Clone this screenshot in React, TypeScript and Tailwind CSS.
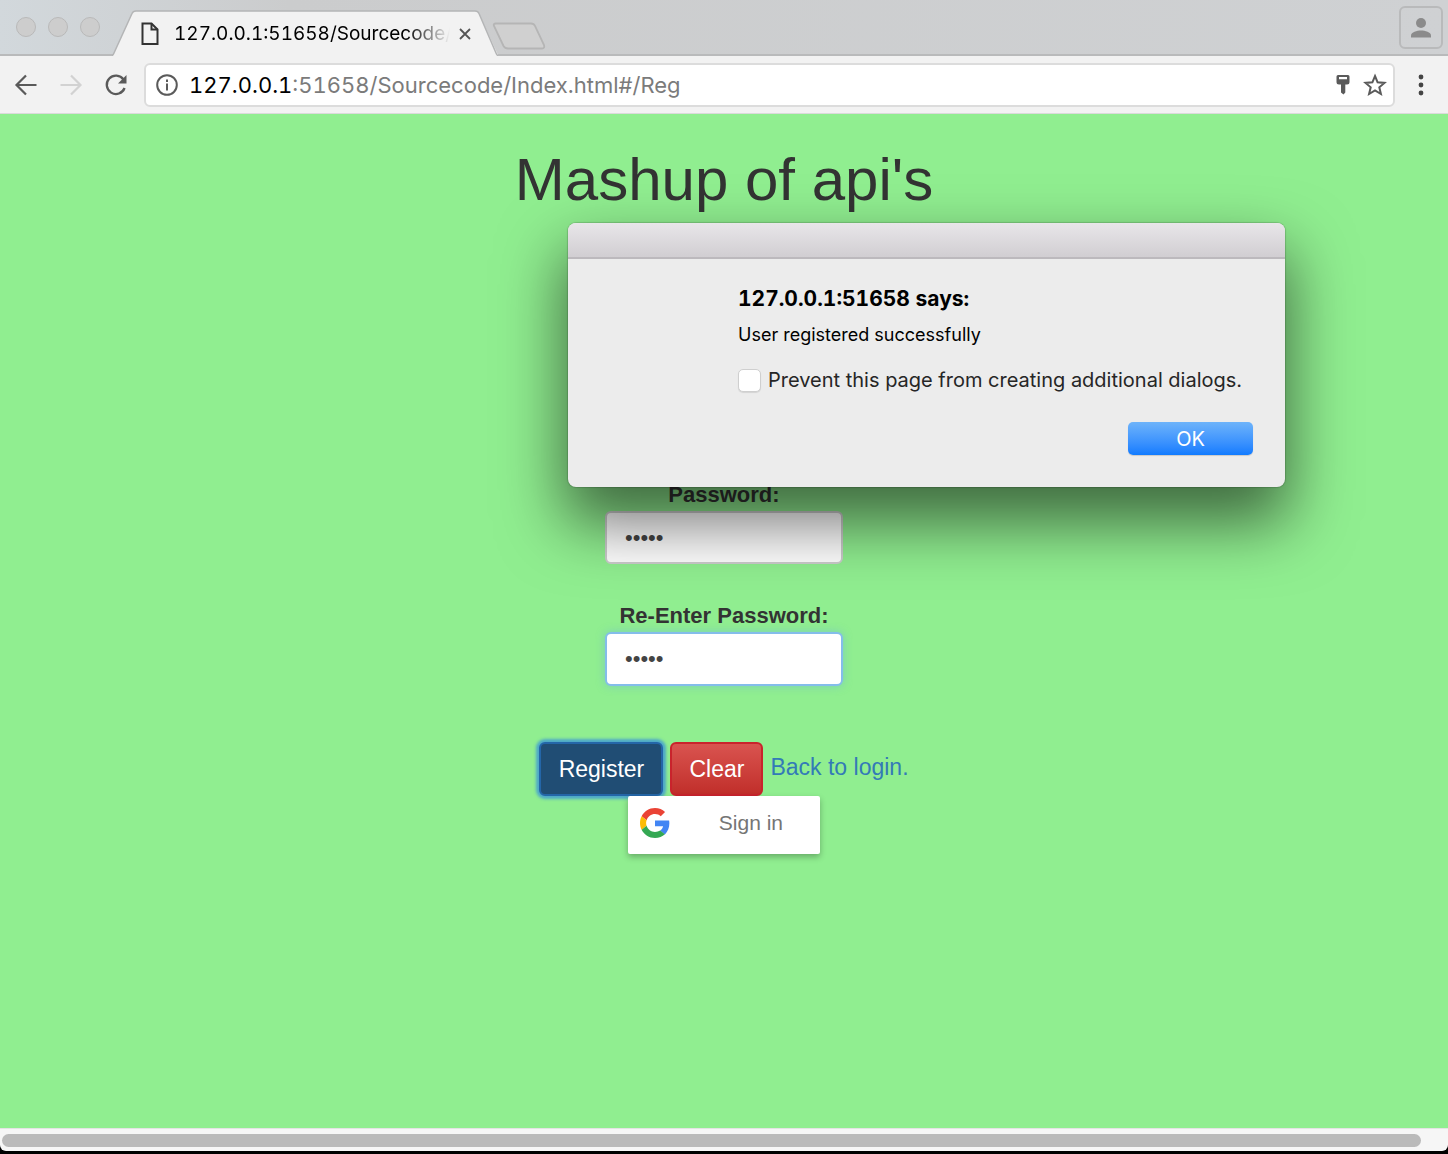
import React from "react";

function TabStrip() {
  return (
    <header className="relative flex h-[56px] items-start border-b-2 border-[#b9babb] bg-linear-to-r from-[#d2d8dc] via-[#cbcccd] via-20% to-[#cfd1d3]">
      <div className="flex gap-3 pt-[17px] pl-4">
        <span className="size-5 rounded-full border border-[#b9b9b9] bg-[#cdcdcd]" />
        <span className="size-5 rounded-full border border-[#b9b9b9] bg-[#cdcdcd]" />
        <span className="size-5 rounded-full border border-[#b9b9b9] bg-[#cdcdcd]" />
      </div>
      <div className="relative ml-3 h-[56px] w-[386px]">
        <svg className="absolute inset-0" width="386" height="56" viewBox="0 0 386 56" aria-hidden="true">
          <path d="M0 56 L1 55 L20 13.500 Q21 11 24 11 H363 Q366 11 367 13.500 L386 55 V56Z" fill="#f2f2f2" />
          <path d="M0 55.500 Q1 55.500 2 53 L20 13.500 Q21 11 24 11 H363 Q366 11 367 13.500 L384 53 Q385 55.500 386 55.500" fill="none" stroke="#b4b5b6" strokeWidth="1.500" />
        </svg>
        <div className="relative flex h-full items-center pt-3 pl-[29px]">
          <svg width="18" height="24" viewBox="0 0 18 24" fill="none" stroke="#333" strokeWidth="2" aria-hidden="true">
            <path d="M1.500 1.500H10.500L16.500 7.500V22H1.500Z" />
            <path d="M10.500 1.500V7.500H16.500" />
          </svg>
          <span className="ml-[15px] w-[276px] mask-r-from-84% mask-r-to-100% font-['Inter',sans-serif] text-[19px] leading-6 whitespace-nowrap text-black tabular-nums">
            127.0.0.1:51658/Sourcecode/
          </span>
          <button type="button" aria-label="Close tab" className="ml-2">
            <svg width="14" height="14" viewBox="0 0 14 14" stroke="#555" strokeWidth="1.800" aria-hidden="true">
              <path d="M2 2L12 12M12 2L2 12" />
            </svg>
          </button>
        </div>
      </div>
      <button type="button" aria-label="New tab" className="-ml-[6px] pt-[22px]">
        <svg width="56" height="28" viewBox="0 0 56 28" aria-hidden="true">
          <path d="M4 1.500H39Q42 1.500 43 4L52 23Q53 26.500 50 26.500H16Q13 26.500 11.500 24L2 4Q1 1.500 4 1.500Z" fill="#d0d0d0" stroke="#b5b5b5" strokeWidth="1.800" />
        </svg>
      </button>
      <button type="button" aria-label="Profile" className="mt-[6px] mr-[5px] ml-auto flex h-[43px] w-11 items-center justify-center rounded-md border-2 border-[#b9babb]">
        <svg width="22" height="22" viewBox="0 0 22 22" fill="#8b8b8b" aria-hidden="true">
          <circle cx="11" cy="6" r="5" />
          <path d="M1 20.500V18.500C1 15 7 13.500 11 13.500S21 15 21 18.500V20.500Z" />
        </svg>
      </button>
    </header>
  );
}

function Toolbar() {
  return (
    <div className="flex h-[58px] items-center border-b border-[#dadada] bg-[#f2f2f2] pr-[21px] pl-[14px]">
      <button type="button" aria-label="Back">
        <svg width="24" height="22" viewBox="0 0 24 22" fill="none" stroke="#5a5a5a" strokeWidth="2.200" aria-hidden="true">
          <path d="M22.500 11H3M12 1.500L2.500 11L12 20.500" />
        </svg>
      </button>
      <button type="button" aria-label="Forward" className="ml-[21px]">
        <svg width="24" height="22" viewBox="0 0 24 22" fill="none" stroke="#d2d2d2" strokeWidth="2.200" aria-hidden="true">
          <path d="M1.500 11H21M12 1.500L21.500 11L12 20.500" />
        </svg>
      </button>
      <button type="button" aria-label="Reload" className="ml-[21px]">
        <svg width="24" height="24" viewBox="0 0 24 24" aria-hidden="true">
          <path d="M19.500 6.500A9.200 9.200 0 1 0 20.600 15" fill="none" stroke="#5a5a5a" strokeWidth="2.300" />
          <path d="M22.500 2V10.500H14Z" fill="#5a5a5a" />
        </svg>
      </button>
      <div className="ml-4 flex h-11 min-w-0 flex-1 items-center rounded-md border-2 border-[#dcdcdc] bg-white pr-[6px] pl-[9px]">
        <svg width="24" height="24" viewBox="0 0 24 24" fill="none" stroke="#5a5a5a" strokeWidth="2" aria-hidden="true">
          <circle cx="12" cy="12" r="9.800" />
          <path d="M12 10.500V17.500M12 6.500V9" />
        </svg>
        <span className="ml-[10px] min-w-0 flex-1 truncate font-['Inter',sans-serif] text-[22px] leading-8 text-[#7b7b7b] tabular-nums">
          <span className="text-black">127.0.0.1</span>:51658/Sourcecode/Index.html#/Reg
        </span>
        <button type="button" aria-label="Saved password">
          <svg width="14" height="22" viewBox="0 0 14 22" fill="#5a5a5a" aria-hidden="true">
            <path fillRule="evenodd" d="M2 1H12Q13.500 1 13.500 2.500V8Q13.500 10.500 11 10.500H9.300V18.500L7.500 20.500L5 18.500V10.500H3Q.5 10.500 .5 8V2.500Q.5 1 2 1ZM3 3V5.200H11V3Z" />
          </svg>
        </button>
        <button type="button" aria-label="Bookmark" className="ml-[13px]">
          <svg width="24" height="24" viewBox="0 0 24 24" fill="none" stroke="#5a5a5a" strokeWidth="2" aria-hidden="true">
            <path d="M12 3L14.600 9.300L21.500 9.900L16.300 14.300L17.900 21L12 17.400L6.100 21L7.700 14.300L2.500 9.900L9.400 9.300Z" />
          </svg>
        </button>
      </div>
      <button type="button" aria-label="Menu" className="ml-5">
        <svg width="12" height="22" viewBox="0 0 12 22" fill="#444" aria-hidden="true">
          <circle cx="6" cy="3" r="2.400" />
          <circle cx="6" cy="11" r="2.400" />
          <circle cx="6" cy="19" r="2.400" />
        </svg>
      </button>
    </div>
  );
}

function AlertDialog() {
  return (
    <section
      role="dialog"
      aria-labelledby="alert-title"
      className="absolute top-[109px] left-[568px] w-[717px] rounded-lg bg-[#ececec] pb-8 font-['Inter',sans-serif] shadow-[0_0_1px_1px_rgba(0,0,0,0.15),0_32px_64px_4px_rgba(0,0,0,0.56)]"
    >
      <div className="h-9 rounded-t-lg border-b-2 border-[#bcb9bd] bg-linear-to-b from-[#e8e6e9] to-[#d1ced2]" />
      <div className="pr-8 pl-[170px]">
        <h2 id="alert-title" className="pt-[26px] text-[21px] leading-7 font-bold text-black tabular-nums">
          127.0.0.1:51658 says:
        </h2>
        <p className="pt-[10px] text-[18px] leading-6 text-black">User registered successfully</p>
        <label className="mt-[17px] flex items-center gap-[7px] text-[20px] leading-8 whitespace-nowrap text-[#262626]">
          <input
            type="checkbox"
            className="size-[23px] shrink-0 appearance-none rounded-[5px] border border-[#cfcfcf] bg-white shadow-[0_1px_1px_rgba(0,0,0,0.1)]"
          />
          Prevent this page from creating additional dialogs.
        </label>
        <div className="flex justify-end pt-[26px]">
          <button
            type="button"
            className="h-[33px] w-[125px] rounded-[5px] bg-linear-to-b from-[#6db3fa] to-[#0f7bff] text-[20px] leading-8 text-white shadow-[0_1px_1px_rgba(0,0,0,0.15)]"
          >
            OK
          </button>
        </div>
      </div>
    </section>
  );
}

function GoogleLogo() {
  return (
    <svg width="30" height="30" viewBox="0 0 48 48" aria-hidden="true">
      <path fill="#EA4335" d="M24 9.500c3.540 0 6.710 1.220 9.210 3.600l6.850-6.850C35.900 2.380 30.470 0 24 0 14.620 0 6.510 5.380 2.560 13.220l7.980 6.190C12.430 13.720 17.740 9.500 24 9.500z" />
      <path fill="#4285F4" d="M46.980 24.550c0-1.570-.15-3.090-.38-4.550H24v9.020h12.940c-.58 2.960-2.260 5.480-4.780 7.180l7.730 6c4.510-4.180 7.090-10.360 7.090-17.650z" />
      <path fill="#FBBC05" d="M10.530 28.590c-.48-1.450-.76-2.990-.76-4.590s.27-3.140.76-4.590l-7.980-6.190C.92 16.460 0 20.120 0 24c0 3.880.92 7.540 2.560 10.780l7.970-6.190z" />
      <path fill="#34A853" d="M24 48c6.480 0 11.930-2.130 15.890-5.810l-7.730-6c-2.150 1.450-4.920 2.300-8.160 2.300-6.260 0-11.570-4.220-13.470-9.910l-7.980 6.190C6.510 42.620 14.620 48 24 48z" />
    </svg>
  );
}

function RegisterPage() {
  return (
    <main className="relative flex-1 overflow-hidden bg-[#90ee90] font-['Liberation_Sans',sans-serif]">
      <form className="flex flex-col items-center text-[#333]">
        <h1 className="pt-8 text-[60px] leading-[68px] font-medium">Mashup of api's</h1>
        <label htmlFor="password" className="mt-[265px] text-[22px] leading-8 font-bold">
          Password:
        </label>
        <input
          id="password"
          type="password"
          defaultValue="abcde"
          className="h-[53px] w-[238px] rounded-md border-2 border-[#ccc] bg-white px-[18px] text-[22px] text-[#444] outline-none"
        />
        <label htmlFor="confirm" className="mt-9 text-[22px] leading-8 font-bold">
          Re-Enter Password:
        </label>
        <input
          id="confirm"
          type="password"
          defaultValue="abcde"
          className="h-[54px] w-[238px] rounded-md border-2 border-[#84bdea] bg-white px-[18px] text-[22px] text-[#444] shadow-[0_0_9px_rgba(102,175,233,0.5)] outline-none"
        />
        <div className="mt-14 flex h-[54px] text-[23px]">
          <button
            type="button"
            className="mr-[7px] w-[124px] rounded-md border-2 border-[#2466a8] bg-[#204d74] text-white shadow-[0_0_3px_3px_rgba(60,150,215,0.8)]"
          >
            Register
          </button>
          <button
            type="button"
            className="mr-[7px] w-[93px] rounded-md border-2 border-[#c9232c] bg-linear-to-b from-[#d9534f] to-[#c12e2a] text-white"
          >
            Clear
          </button>
          <a href="#/login" className="leading-[50px] text-[#337ab7]">
            Back to login.
          </a>
        </div>
        <button
          type="button"
          className="relative flex h-[58px] w-[192px] items-center rounded-[2px] bg-white pr-[37px] pb-[5px] pl-3 text-[21px] text-[#757575] shadow-[0_3px_6px_rgba(0,0,0,0.28)]"
        >
          <GoogleLogo />
          <span className="ml-auto">Sign in</span>
        </button>
      </form>
      <AlertDialog />
    </main>
  );
}

export default function App() {
  return (
    <div className="flex min-h-screen flex-col bg-black">
      <TabStrip />
      <Toolbar />
      <RegisterPage />
      <div className="mb-[3px] h-[23px] rounded-b-md border-t border-[#e4e4e4] bg-[#f6f6f6] pt-[5px] pr-[27px] pl-[2px]">
        <div className="h-[13px] rounded-full bg-[#bababa]" />
      </div>
    </div>
  );
}
